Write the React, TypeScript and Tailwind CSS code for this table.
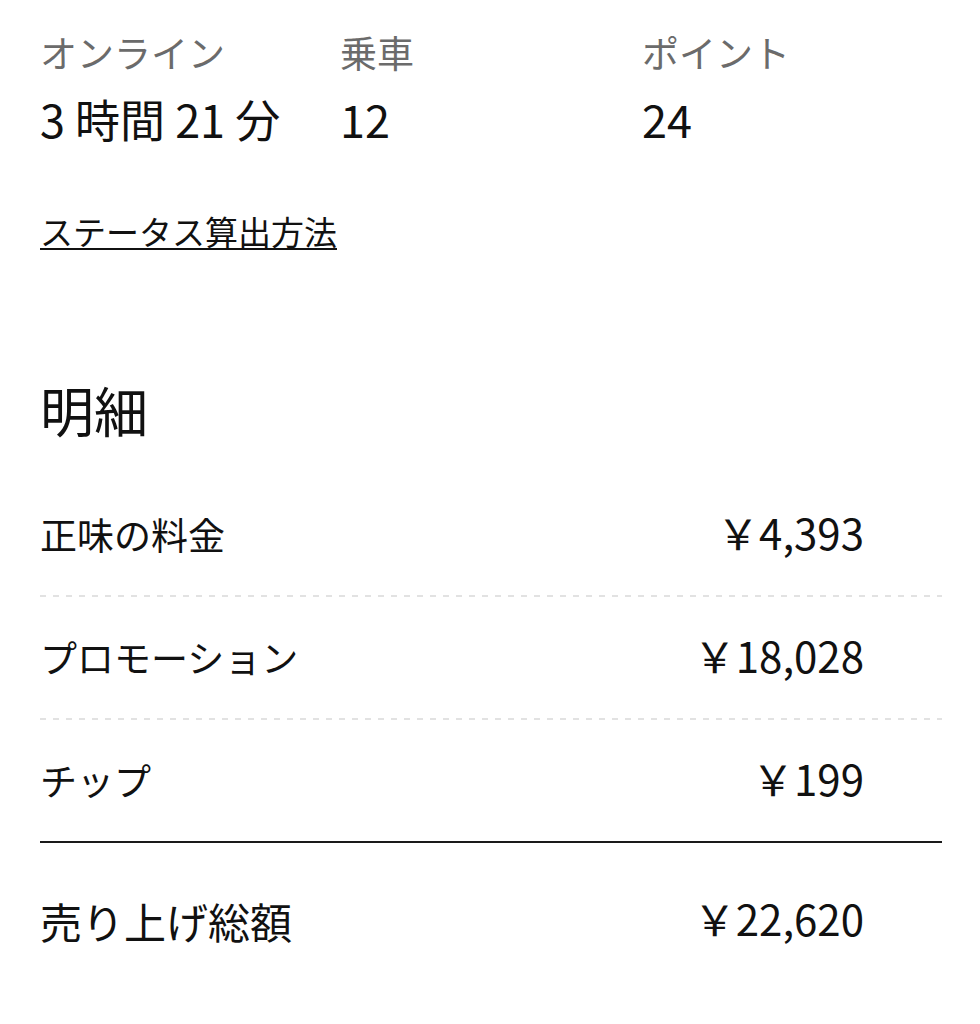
import React from "react";

const font = { fontFamily: '"Noto Sans CJK JP", "Noto Sans", sans-serif' };

function Dashed() {
  return <div className="h-[2px] w-full bg-[repeating-linear-gradient(to_right,#e2e2e2_0px,#e2e2e2_6px,transparent_6px,transparent_13px)]" />;
}

function Row({ label, amount }: { label: string; amount: string }) {
  return (
    <div className="flex h-[121px] items-center justify-between pr-[78px]">
      <span className="text-[37px] leading-[37px] text-[#111]">{label}</span>
      <span className="-mt-[6px] text-[42px] leading-[42px] text-[#111]">{amount}</span>
    </div>
  );
}

export default function App() {
  return (
    <div className="min-h-[1024px] w-[980px] bg-white pl-[40px] pr-[38px] pt-[34px]" style={font}>
      <div className="grid grid-cols-[300px_302px_1fr]">
        <div className="text-[37px] leading-[36px] text-[#6b6b6b]">オンライン</div>
        <div className="text-[37px] leading-[36px] text-[#6b6b6b]">乗車</div>
        <div className="text-[37px] leading-[36px] text-[#6b6b6b]">ポイント</div>
        <div className="mt-[26px] text-[45px] leading-[45px] text-[#111]">3 時間 21 分</div>
        <div className="mt-[26px] text-[45px] leading-[45px] text-[#111]">12</div>
        <div className="mt-[26px] text-[45px] leading-[45px] text-[#111]">24</div>
      </div>
      <div className="mt-[74px] text-[33px] leading-[33px] text-[#111] underline decoration-2 underline-offset-[3px]">
        ステータス算出方法
      </div>
      <div className="mt-[135px] text-[54px] leading-[54px] text-[#111]">明細</div>
      <div className="mt-[37px]">
        <Row label="正味の料金" amount="￥4,393" />
        <Dashed />
        <Row label="プロモーション" amount="￥18,028" />
        <Dashed />
        <Row label="チップ" amount="￥199" />
        <div className="h-[2px] w-full bg-[#1a1a1a]" />
        <div className="flex h-[155px] items-center justify-between pr-[78px]">
          <span className="text-[42px] leading-[42px] text-[#111]">売り上げ総額</span>
          <span className="-mt-[6px] text-[42px] leading-[42px] text-[#111]">￥22,620</span>
        </div>
      </div>
    </div>
  );
}
